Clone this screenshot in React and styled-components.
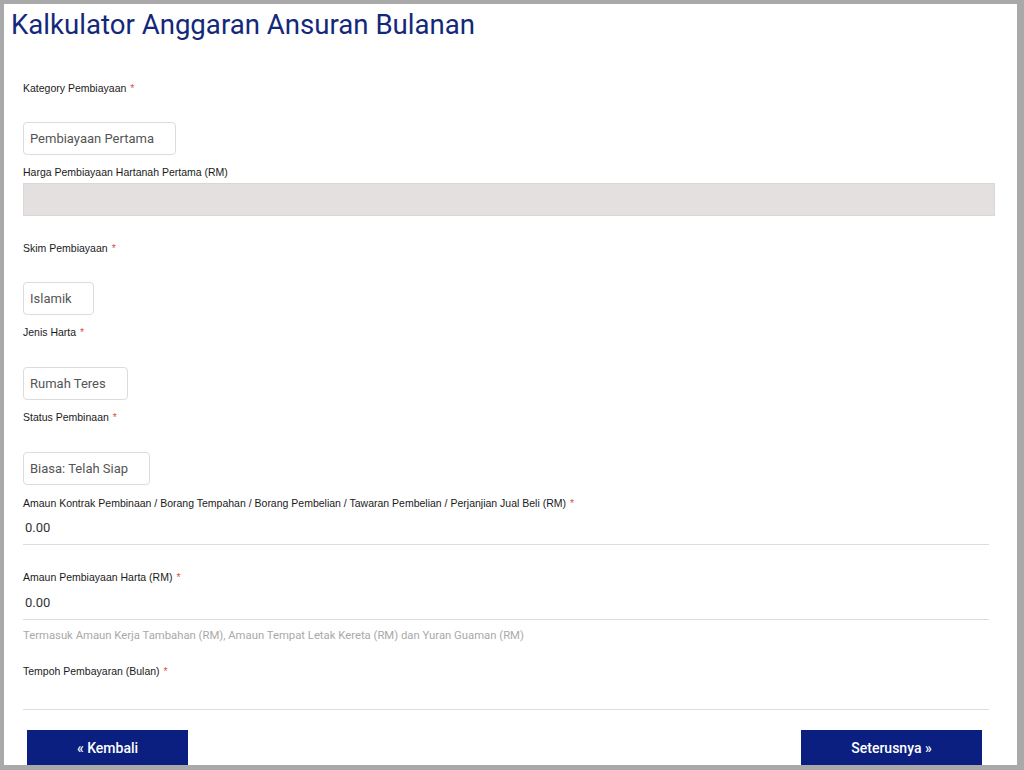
import styled, { createGlobalStyle } from "styled-components";

const GlobalStyle = createGlobalStyle`
  html, body {
    margin: 0;
    padding: 0;
    background: #a9a9a9;
  }
  * {
    box-sizing: border-box;
  }
`;

const Frame = styled.div`
  width: 1024px;
  height: 770px;
  overflow: hidden;
  background: #ffffff;
  border-style: solid;
  border-color: #a9a9a9;
  border-width: 4px 7px 5px 4px;
`;

const Title = styled.h1`
  margin: 0;
  padding: 4px 0 0 7px;
  font-family: Roboto, "Liberation Sans", sans-serif;
  font-weight: 400;
  font-size: 27.6px;
  line-height: 34px;
  color: #14287a;
`;

const Form = styled.div`
  display: flex;
  flex-direction: column;
  align-items: flex-start;
  padding: 39px 22px 0 19px;
`;

const Label = styled.div`
  font-family: "Liberation Sans", Arial, sans-serif;
  font-size: 10.5px;
  line-height: 14px;
  color: #1a1a1a;
  margin-top: ${(p) => p.$top || 0}px;
  margin-bottom: ${(p) => p.$bottom || 0}px;
`;

const Star = styled.span`
  color: #d9534f;
  margin-left: 4px;
`;

const Select = styled.div`
  height: 33px;
  display: flex;
  align-items: center;
  padding: 0 21px 0 6px;
  border: 1px solid #dcdcdc;
  border-radius: 4px;
  background: #fff;
  font-family: Roboto, "Liberation Sans", sans-serif;
  font-size: 13px;
  color: #555;
`;

const ReadOnly = styled.div`
  align-self: stretch;
  height: 33px;
  background: #e3e0df;
  border: 1px solid #dad7d6;
`;

const Input = styled.div`
  align-self: stretch;
  margin-right: 6px;
  height: ${(p) => p.$h || 35}px;
  display: flex;
  align-items: center;
  padding: 0 0 0 2px;
  border-bottom: 1px solid #dddddd;
  font-family: Roboto, "Liberation Sans", sans-serif;
  font-size: 13px;
  color: #333;
`;

const Help = styled.div`
  margin-top: 9px;
  font-family: Roboto, "Liberation Sans", sans-serif;
  font-size: 11.3px;
  line-height: 14px;
  color: #a9a9a9;
`;

const Actions = styled.div`
  align-self: stretch;
  display: flex;
  justify-content: space-between;
  margin-top: 20px;
  padding: 0 13px 0 4px;
`;

const Button = styled.button`
  width: ${(p) => p.$w}px;
  height: 36px;
  border: none;
  border-radius: 0;
  background: #0b1f80;
  color: #fff;
  font-family: Roboto, "Liberation Sans", sans-serif;
  font-weight: 500;
  font-size: 14px;
  cursor: pointer;
`;

function Field({ label, required, top, bottom }) {
  return (
    <Label $top={top} $bottom={bottom}>
      {label}
      {required && <Star>*</Star>}
    </Label>
  );
}

export default function App() {
  return (
    <>
      <GlobalStyle />
      <Frame>
        <Title>Kalkulator Anggaran Ansuran Bulanan</Title>
        <Form>
          <Field label="Kategory Pembiayaan" required bottom={27} />
          <Select>Pembiayaan Pertama</Select>
          <Field label="Harga Pembiayaan Hartanah Pertama (RM)" top={10} bottom={4} />
          <ReadOnly />
          <Field label="Skim Pembiayaan" required top={25} bottom={27} />
          <Select>Islamik</Select>
          <Field label="Jenis Harta" required top={10} bottom={28} />
          <Select>Rumah Teres</Select>
          <Field label="Status Pembinaan" required top={10} bottom={28} />
          <Select>Biasa: Telah Siap</Select>
          <Field
            label="Amaun Kontrak Pembinaan / Borang Tempahan / Borang Pembelian / Tawaran Pembelian / Perjanjian Jual Beli (RM)"
            required
            top={11}
          />
          <Input>0.00</Input>
          <Field label="Amaun Pembiayaan Harta (RM)" required top={25} bottom={1} />
          <Input>0.00</Input>
          <Help>
            Termasuk Amaun Kerja Tambahan (RM), Amaun Tempat Letak Kereta (RM) dan Yuran Guaman (RM)
          </Help>
          <Field label="Tempoh Pembayaran (Bulan)" required top={21} />
          <Input $h={32} />
          <Actions>
            <Button $w={161}>« Kembali</Button>
            <Button $w={181}>Seterusnya »</Button>
          </Actions>
        </Form>
      </Frame>
    </>
  );
}
